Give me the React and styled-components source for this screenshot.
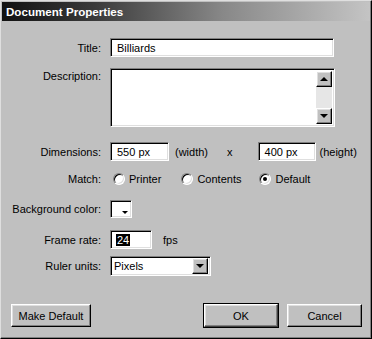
import React from 'react'
import styled, { createGlobalStyle, css } from 'styled-components'

const GlobalStyle = createGlobalStyle`
  html, body {
    margin: 0;
    padding: 0;
    background: #c0c0c0;
  }
  body {
    font-family: "Liberation Sans", Arial, sans-serif;
    font-size: 11px;
    color: #000;
  }
`

const sunken = css`
  box-sizing: border-box;
  border: 1px solid;
  border-color: #808080 #fff #fff #808080;
  box-shadow: inset 1px 1px #000, inset -1px -1px #dfdfdf;
  background: #fff;
`

const raised = css`
  box-sizing: border-box;
  border: 1px solid;
  border-color: #fff #000 #000 #fff;
  box-shadow: inset -1px -1px #808080, inset 1px 1px #dfdfdf;
  background: #c0c0c0;
`

const Window = styled.div`
  width: 372px;
  height: 339px;
  box-sizing: border-box;
  background: #c0c0c0;
  border: 1px solid;
  border-color: #dfdfdf #000 #000 #dfdfdf;
  box-shadow: inset -1px -1px #808080;
  padding: 1px;
  display: flex;
  flex-direction: column;
`

const TitleBar = styled.div`
  height: 19px;
  display: flex;
  align-items: center;
  padding-left: 4px;
  background: linear-gradient(to right, #111 0%, #3a3a3a 25%, #888 60%, #c4c4c4 100%);
  color: #fff;
  font-weight: bold;
  font-size: 11.6px;
`

const Body = styled.div`
  flex: 1;
  display: flex;
  flex-direction: column;
  padding-top: 17px;
`

const Row = styled.div`
  display: flex;
  align-items: ${p => (p.$top ? 'flex-start' : 'center')};
  height: ${p => p.$h}px;
  margin-top: ${p => p.$mt || 0}px;
`

const Label = styled.div`
  width: 99px;
  flex: none;
  text-align: right;
  padding-top: ${p => p.$pt || 0}px;
  margin-right: 9px;
  white-space: nowrap;
`

const TextField = styled.div`
  ${sunken};
  width: ${p => p.$w}px;
  height: ${p => p.$h || 19}px;
  display: flex;
  align-items: center;
  padding-left: ${p => p.$pl || 6}px;
`

const TextArea = styled.div`
  ${sunken};
  width: 225px;
  height: 59px;
  display: flex;
  justify-content: flex-end;
  padding: 2px;
`

const ScrollBar = styled.div`
  width: 16px;
  display: flex;
  flex-direction: column;
  background: #e6e6e6;
`

const ScrollTrack = styled.div`
  flex: 1;
`

const ArrowButton = styled.div`
  ${raised};
  width: 16px;
  height: 16px;
  flex: none;
  display: flex;
  align-items: center;
  justify-content: center;
`

const Arrow = styled.span`
  width: 0;
  height: 0;
  border-left: 4px solid transparent;
  border-right: 4px solid transparent;
  ${p =>
    p.$up
      ? 'border-bottom: 4px solid #000;'
      : 'border-top: 4px solid #000;'}
`

const Unit = styled.span`
  margin-left: ${p => p.$ml || 0}px;
  white-space: nowrap;
`

const RadioGroup = styled.div`
  display: flex;
  align-items: center;
  margin-left: 3px;
`

const RadioOption = styled.label`
  display: flex;
  align-items: center;
  margin-right: ${p => p.$mr || 0}px;
`

const RadioCircle = styled.span`
  ${sunken};
  width: 12px;
  height: 12px;
  border-radius: 50%;
  display: flex;
  align-items: center;
  justify-content: center;
  margin-right: 4px;
  &::after {
    content: '';
    display: ${p => (p.$checked ? 'block' : 'none')};
    width: 4px;
    height: 4px;
    border-radius: 50%;
    background: #000;
  }
`

const Swatch = styled.div`
  ${sunken};
  width: 22px;
  height: 18px;
  display: flex;
  align-items: flex-end;
  justify-content: flex-end;
  padding: 0 3px 3px 0;
`

const SwatchArrow = styled.span`
  width: 0;
  height: 0;
  border-left: 3px solid transparent;
  border-right: 3px solid transparent;
  border-top: 3px solid #000;
`

const Selected = styled.span`
  background: #000;
  color: #fff;
  padding: 0 1px;
  margin-left: -1px;
`

const Select = styled.div`
  ${sunken};
  width: 101px;
  height: 20px;
  display: flex;
  align-items: center;
  padding: 2px;
`

const SelectText = styled.span`
  flex: 1;
  padding-left: 1px;
`

const ButtonBar = styled.div`
  display: flex;
  align-items: center;
  margin-top: 28px;
  padding: 0 8px 0 9px;
`

const Button = styled.button`
  ${raised};
  width: ${p => p.$w}px;
  height: 23px;
  font-family: inherit;
  font-size: 11px;
  color: #000;
  padding: 0;
  margin-left: ${p => p.$ml || 0}px;
  ${p =>
    p.$default &&
    css`
      outline: 1px solid #000;
      outline-offset: 0;
      border-color: #fff #404040 #404040 #fff;
    `}
`

const Spacer = styled.div`
  flex: 1;
`

export default function App() {
  return (
    <>
      <GlobalStyle />
      <Window>
        <TitleBar>Document Properties</TitleBar>
        <Body>
          <Row $h={19}>
            <Label>Title:</Label>
            <TextField $w={224}>Billiards</TextField>
          </Row>
          <Row $h={59} $mt={11} $top>
            <Label $pt={2}>Description:</Label>
            <TextArea>
              <ScrollBar>
                <ArrowButton><Arrow $up /></ArrowButton>
                <ScrollTrack />
                <ArrowButton><Arrow /></ArrowButton>
              </ScrollBar>
            </TextArea>
          </Row>
          <Row $h={19} $mt={15}>
            <Label>Dimensions:</Label>
            <TextField $w={59}>550 px</TextField>
            <Unit $ml={6}>(width)</Unit>
            <Unit $ml={19}>x</Unit>
            <TextField $w={58} style={{ marginLeft: 25 }}>400 px</TextField>
            <Unit $ml={4}>(height)</Unit>
          </Row>
          <Row $h={18} $mt={9}>
            <Label>Match:</Label>
            <RadioGroup>
              <RadioOption $mr={20}><RadioCircle />Printer</RadioOption>
              <RadioOption $mr={18}><RadioCircle />Contents</RadioOption>
              <RadioOption><RadioCircle $checked />Default</RadioOption>
            </RadioGroup>
          </Row>
          <Row $h={18} $mt={12}>
            <Label>Background color:</Label>
            <Swatch><SwatchArrow /></Swatch>
          </Row>
          <Row $h={19} $mt={12}>
            <Label>Frame rate:</Label>
            <TextField $w={42}><Selected>24</Selected></TextField>
            <Unit $ml={11}>fps</Unit>
          </Row>
          <Row $h={20} $mt={7}>
            <Label>Ruler units:</Label>
            <Select>
              <SelectText>Pixels</SelectText>
              <ArrowButton><Arrow /></ArrowButton>
            </Select>
          </Row>
          <ButtonBar>
            <Button $w={80}>Make Default</Button>
            <Spacer />
            <Button $w={74} $default>OK</Button>
            <Button $w={75} $ml={9}>Cancel</Button>
          </ButtonBar>
        </Body>
      </Window>
    </>
  )
}
